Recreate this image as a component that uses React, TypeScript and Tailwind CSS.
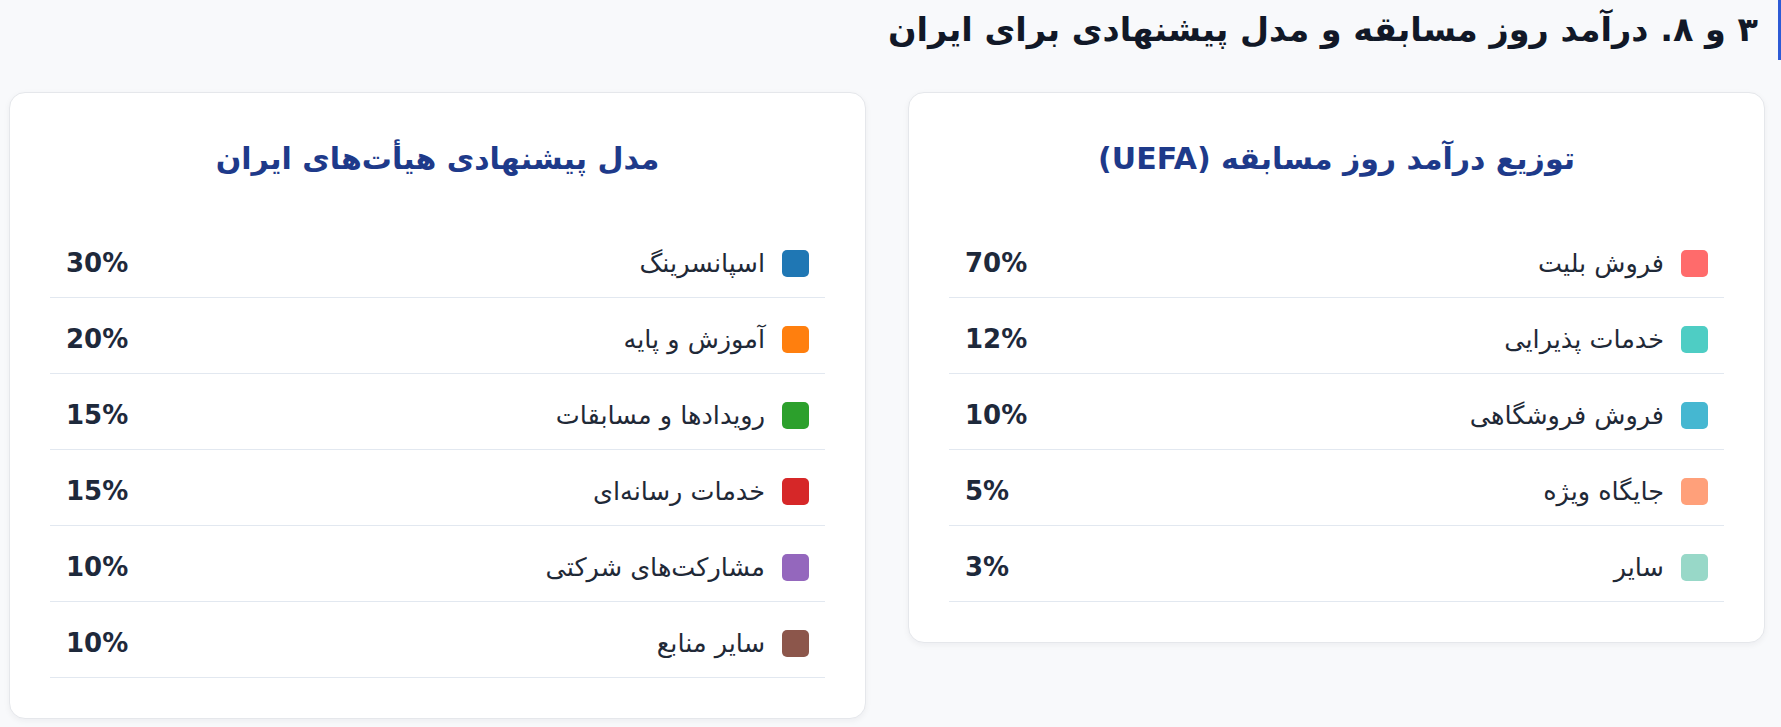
type Item = { label: string; value: string; color: string }

const uefa: Item[] = [
  { label: 'فروش بلیت', value: '70%', color: '#ff6b6b' },
  { label: 'خدمات پذیرایی', value: '12%', color: '#4ecdc4' },
  { label: 'فروش فروشگاهی', value: '10%', color: '#45b7d1' },
  { label: 'جایگاه ویژه', value: '5%', color: '#ffa07a' },
  { label: 'سایر', value: '3%', color: '#98d8c8' },
]

const iran: Item[] = [
  { label: 'اسپانسرینگ', value: '30%', color: '#1f77b4' },
  { label: 'آموزش و پایه', value: '20%', color: '#ff7f0e' },
  { label: 'رویدادها و مسابقات', value: '15%', color: '#2ca02c' },
  { label: 'خدمات رسانه‌ای', value: '15%', color: '#d62728' },
  { label: 'مشارکت‌های شرکتی', value: '10%', color: '#9467bd' },
  { label: 'سایر منابع', value: '10%', color: '#8c564b' },
]

function RevenueCard({ title, items }: { title: string; items: Item[] }) {
  return (
    <div className="rounded-2xl border border-[#e5e7eb] bg-white p-10 shadow-[0_2px_6px_rgba(15,23,42,0.05)]">
      <h3 className="flex h-[89px] items-start justify-center pt-[3px] text-center text-[30px] font-bold text-[#1e3a8a]">
        {title}
      </h3>
      <div>
        {items.map(item => (
          <div
            key={item.label}
            className="flex h-[76px] items-center justify-between border-b border-[#e2e8f0] px-4 pt-[8px]"
          >
            <div className="flex items-center gap-[17px]">
              <span
                className="block h-[27px] w-[27px] rounded-[5px]"
                style={{ backgroundColor: item.color }}
              />
              <span className="text-[25.5px] text-[#1f2937]">{item.label}</span>
            </div>
            <span className="text-[26px] font-bold text-[#1e293b]" dir="ltr">
              {item.value}
            </span>
          </div>
        ))}
      </div>
    </div>
  )
}

export default function App() {
  return (
    <div
      dir="rtl"
      className="min-h-screen bg-[#f8f9fb] pl-[9px] pr-[16px]"
      style={{ fontFamily: '"DejaVu Sans", sans-serif' }}
    >
      <div className="-mr-[16px] flex">
        <h2 className="flex h-[60px] items-center border-r-[3px] border-[#2d5bd6] pr-5 text-[33.5px] font-bold text-[#111827]">
          ۳ و ۸. درآمد روز مسابقه و مدل پیشنهادی برای ایران
        </h2>
      </div>

      <div className="mt-[32px] grid grid-cols-2 items-start gap-[42px]">
        <RevenueCard title="توزیع درآمد روز مسابقه (UEFA)" items={uefa} />
        <RevenueCard title="مدل پیشنهادی هیأت‌های ایران" items={iran} />
      </div>
    </div>
  )
}
